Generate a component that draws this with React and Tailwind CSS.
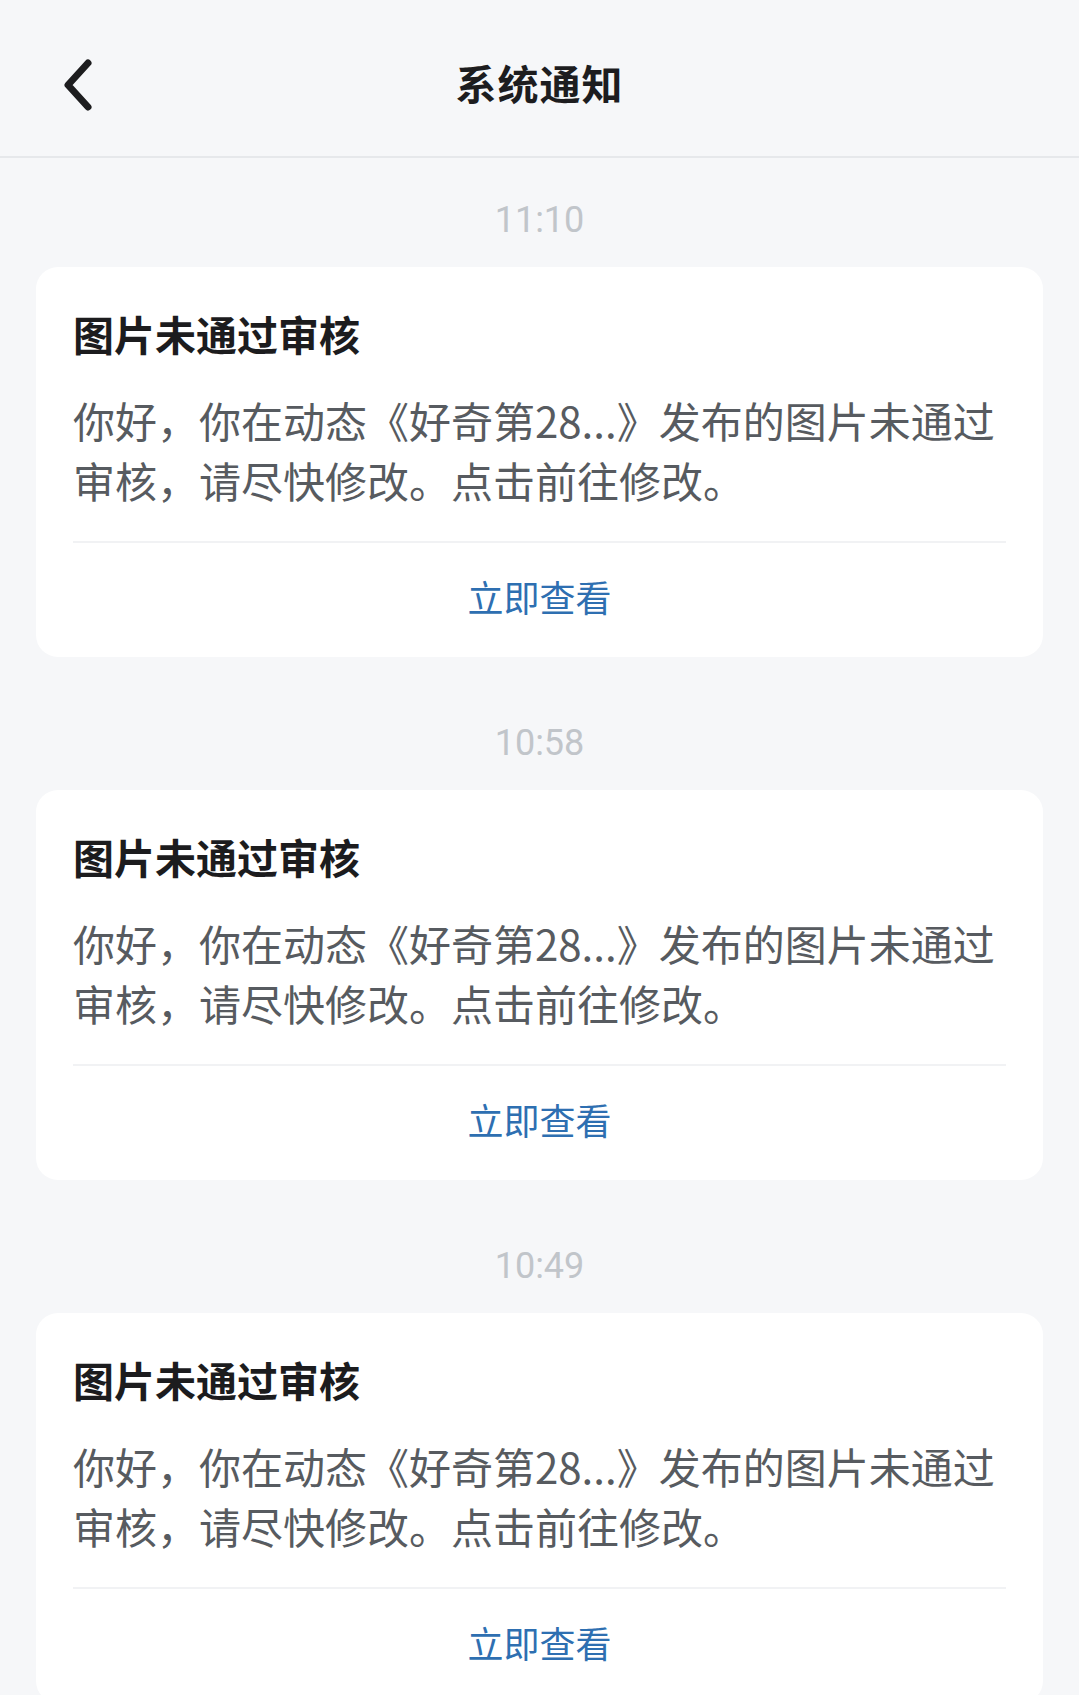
import React from 'react';

const notices = [
  { id: '1', time: '11:10' },
  { id: '2', time: '10:58' },
  { id: '3', time: '10:49' },
];

const cjk = { fontFamily: '"Noto Sans CJK SC", "Noto Sans", sans-serif' };

function BackIcon() {
  return (
    <svg width="40" height="60" viewBox="0 0 40 60" fill="none">
      <path d="M32 8 L12 30 L32 52" stroke="#1d1d1f" strokeWidth="7" strokeLinecap="round" strokeLinejoin="round" />
    </svg>
  );
}

function NoticeCard({ time }) {
  return (
    <div className="pt-[38px] pb-[24px]">
      <div className="text-center text-[36px] leading-[48px] text-[#c1c5ca]" style={{ fontFamily: 'Roboto, "Noto Sans", sans-serif' }}>
        {time}
      </div>
      <div className="mt-[23px] mx-[36px] bg-white rounded-[22px] px-[37px]">
        <div className="pt-[38px] text-[41px] leading-[56px] font-bold text-[#1c1c1e]">图片未通过审核</div>
        <p className="mt-[29px] text-[42px] leading-[60px] text-[#575b60]">
          你好，你在动态《好奇第28...》发布的图片未通过审核，请尽快修改。点击前往修改。
        </p>
        <div className="mt-[31px] h-[2px] bg-[#f1f2f4]" />
        <button className="w-full h-[114px] pb-[8px] flex items-center justify-center text-[36px] text-[#2e6fb1]" style={cjk}>
          立即查看
        </button>
      </div>
    </div>
  );
}

export default function App() {
  return (
    <div className="min-h-screen bg-[#f6f7f9]" style={cjk}>
      <header className="relative h-[158px] flex items-center justify-center border-b-2 border-[#e6e8eb]">
        <button className="absolute left-[56px] top-[55px]">
          <BackIcon />
        </button>
        <h1 className="mt-[10px] text-[41px] font-bold text-[#1d1d1f] tracking-[1px]">系统通知</h1>
      </header>
      <div>
        {notices.map((n) => (
          <NoticeCard key={n.id} time={n.time} />
        ))}
      </div>
    </div>
  );
}
